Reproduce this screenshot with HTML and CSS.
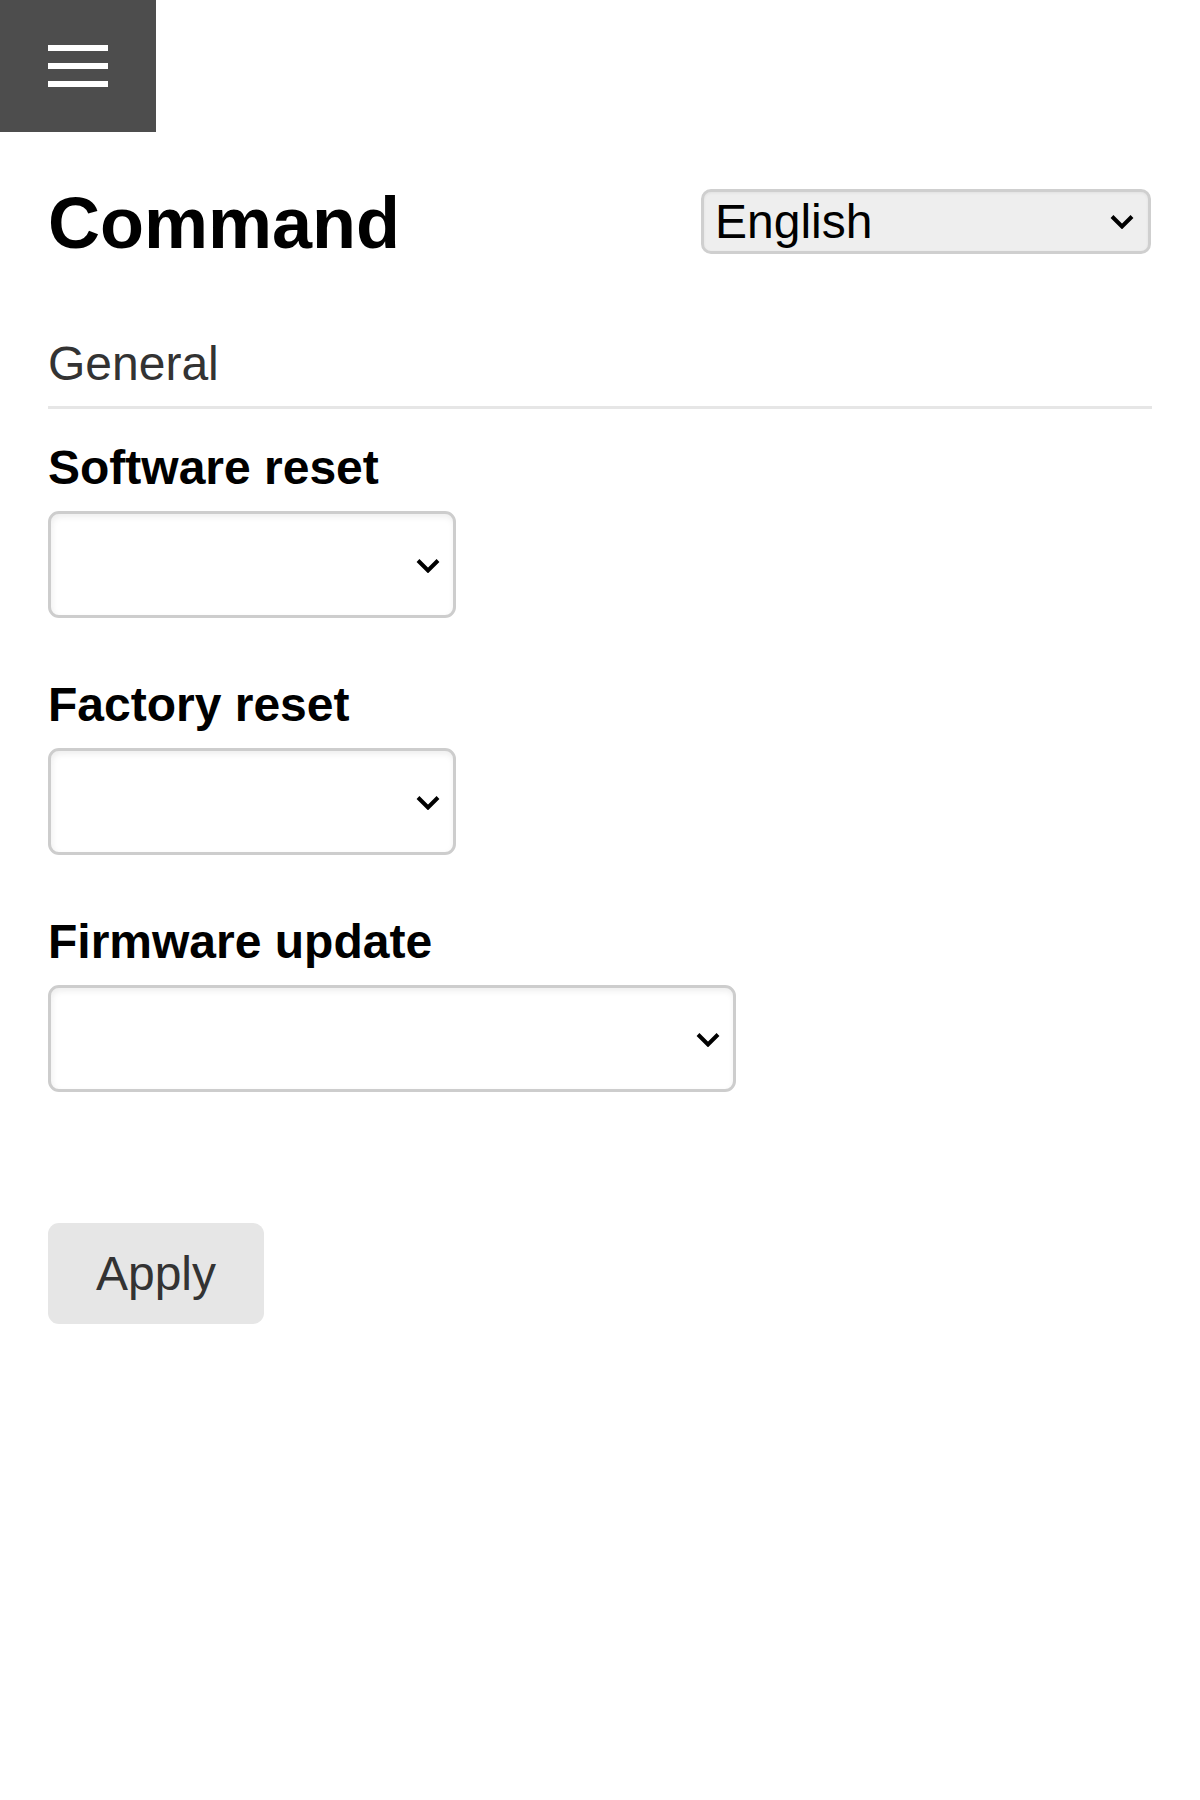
FILE: index.html
```html
<!DOCTYPE html>
<html lang="en">
<head>
<meta charset="utf-8">
<title>Command</title>
<link rel="stylesheet" href="styles.css">
</head>
<body>
<button class="menu-btn" aria-label="Menu">
  <span class="bar"></span>
  <span class="bar"></span>
  <span class="bar"></span>
</button>
<main class="content">
  <header class="page-head">
    <h1 class="title">Command</h1>
    <div class="select-wrap lang-wrap">
      <select class="lang-select">
        <option>English</option>
      </select>
      <svg class="chev" width="24" height="15" viewBox="0 0 24 15"><path d="M2 2.5 L12 12.5 L22 2.5" fill="none" stroke="#000" stroke-width="4"/></svg>
    </div>
  </header>

  <h2 class="section">General</h2>

  <div class="field">
    <label class="label">Software reset</label>
    <div class="select-wrap small">
      <select class="field-select"><option></option></select>
      <svg class="chev" width="24" height="15" viewBox="0 0 24 15"><path d="M2 2.5 L12 12.5 L22 2.5" fill="none" stroke="#000" stroke-width="4"/></svg>
    </div>
  </div>

  <div class="field">
    <label class="label">Factory reset</label>
    <div class="select-wrap small">
      <select class="field-select"><option></option></select>
      <svg class="chev" width="24" height="15" viewBox="0 0 24 15"><path d="M2 2.5 L12 12.5 L22 2.5" fill="none" stroke="#000" stroke-width="4"/></svg>
    </div>
  </div>

  <div class="field">
    <label class="label">Firmware update</label>
    <div class="select-wrap wide">
      <select class="field-select"><option></option></select>
      <svg class="chev" width="24" height="15" viewBox="0 0 24 15"><path d="M2 2.5 L12 12.5 L22 2.5" fill="none" stroke="#000" stroke-width="4"/></svg>
    </div>
  </div>

  <button class="apply">Apply</button>
</main>
</body>
</html>
```

FILE: styles.css
```css
* { box-sizing: border-box; }

html, body {
  margin: 0;
  padding: 0;
  background: #fff;
}

body {
  font-family: "Liberation Sans", Arial, sans-serif;
  color: #000;
}

.menu-btn {
  display: flex;
  flex-direction: column;
  justify-content: center;
  align-items: center;
  gap: 12px;
  width: 156px;
  height: 132px;
  padding: 0;
  border: none;
  background: #4d4d4d;
  cursor: pointer;
}

.menu-btn .bar {
  display: block;
  width: 60px;
  height: 6px;
  background: #fff;
}

.content {
  padding: 0 48px;
}

.page-head {
  display: flex;
  align-items: center;
  justify-content: space-between;
  margin-top: 51px;
}

.title {
  margin: 0;
  font-size: 72px;
  line-height: 80px;
  font-weight: 700;
}

.select-wrap {
  position: relative;
}

.select-wrap .chev {
  position: absolute;
  top: 50%;
  margin-top: -7px;
  pointer-events: none;
}

.lang-wrap {
  width: 450px;
  height: 65px;
  margin-right: 1px;
  margin-top: -4px;
}

.lang-wrap .chev {
  right: 17px;
}

.lang-select {
  appearance: none;
  -webkit-appearance: none;
  width: 100%;
  height: 100%;
  font-family: "Liberation Sans", Arial, sans-serif;
  font-size: 48px;
  color: #000;
  background: #eeeeee;
  border: 3px solid #cfcfcf;
  border-radius: 10px;
  padding: 0 0 0 11px;
  box-shadow: inset 0 1px 3px rgba(0, 0, 0, 0.06);
}

.section {
  margin: 73px 0 0 0;
  font-size: 48px;
  line-height: 56px;
  font-weight: 400;
  color: #333;
  padding-bottom: 14px;
  border-bottom: 3px solid #e6e6e6;
}

.field {
  display: flex;
  flex-direction: column;
  align-items: flex-start;
  margin-top: 31px;
}

.field + .field {
  margin-top: 59px;
}

.label {
  font-size: 48px;
  line-height: 56px;
  font-weight: 700;
  margin-bottom: 15px;
}

.select-wrap.small {
  width: 408px;
  height: 107px;
}

.select-wrap.wide {
  width: 688px;
  height: 107px;
}

.select-wrap.small .chev,
.select-wrap.wide .chev {
  right: 16px;
}

.field-select {
  appearance: none;
  -webkit-appearance: none;
  width: 100%;
  height: 100%;
  font-family: "Liberation Sans", Arial, sans-serif;
  font-size: 48px;
  background: #fff;
  border: 3px solid #cdcdcd;
  border-radius: 11px;
  box-shadow: inset 1px 3px 6px rgba(0, 0, 0, 0.07);
}

.apply {
  display: block;
  margin-top: 131px;
  width: 216px;
  height: 101px;
  border: none;
  border-radius: 11px;
  background: #e6e6e6;
  color: #333;
  font-family: "Liberation Sans", Arial, sans-serif;
  font-size: 48px;
  padding: 0;
  cursor: pointer;
}
```
